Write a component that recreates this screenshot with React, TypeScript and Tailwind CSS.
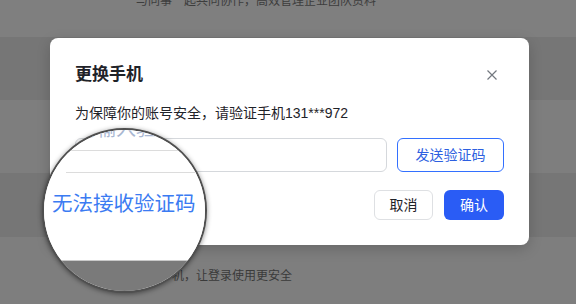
const font = 'font-["Liberation_Sans","Noto_Sans_CJK_SC",sans-serif]';

const Magnifier = () => (
  <div className="absolute left-[42px] top-[128px] flex h-[165px] w-[165px] flex-col overflow-hidden rounded-full border-2 border-[#4f4f4f] bg-white shadow-[0_1px_5px_rgba(0,0,0,0.45)]">
    <div className="flex h-[130px] shrink-0 flex-col bg-white">
      <div className="-mt-[11px] h-[32px] shrink-0 border-b border-[#dcdcdc] pl-[32px] text-[20px] leading-[20px] text-[#a9b7d2]">
        请输入验证码
      </div>
      <div className="ml-[22px] h-[22px] shrink-0 border-b border-[#dcdcdc]" />
      <div className="mt-[17px] pl-[8px] text-[20.5px] leading-[28px] whitespace-nowrap text-[#3b7bf2]">
        无法接收验证码
      </div>
    </div>
    <div className="flex-1 border-t border-[#c9c9c9] bg-[#7a7a7a]" />
  </div>
);

const Dialog = () => (
  <div className="absolute left-[50px] top-[38px] flex h-[207px] w-[479px] flex-col rounded-lg bg-white px-[25px] pt-[25px] pb-[25px] shadow-[0_4px_14px_rgba(0,0,0,0.18)]">
    <div className="flex h-6 items-center justify-between">
      <div className="text-[17px] font-semibold text-[#1f2329]">更换手机</div>
      <svg width="10" height="10" viewBox="0 0 10 10" className="mr-[7px]">
        <path d="M0.5 0.5 9.5 9.5M9.5 0.5 0.5 9.5" stroke="#73787f" strokeWidth="1.2" fill="none" />
      </svg>
    </div>
    <div className="mt-4 text-[14px] leading-5 text-[#1f2329]">
      为保障你的账号安全，请验证手机131***972
    </div>
    <div className="mt-[15px] flex h-[34px] gap-[10px]">
      <input
        className="h-full flex-1 rounded-md border border-[#d5d8dc] px-3 text-[14px] outline-none placeholder:text-[#8f959e]"
        placeholder="请输入验证码"
      />
      <button className="h-full w-[107px] rounded-md border border-[#3370ff] text-[14px] text-[#2d5fe0]">
        发送验证码
      </button>
    </div>
    <div className="mt-[18px] flex h-[30px] items-center justify-between">
      <span className="text-[14px] text-[#3370ff]">无法接收验证码</span>
      <div className="flex h-full gap-[11px]">
        <button className="h-full w-[59px] rounded-md border border-[#dee0e3] text-[14px] text-[#1f2329]">
          取消
        </button>
        <button className="h-full w-[60px] rounded-md bg-[#2a5cf5] text-[14px] text-white">
          确认
        </button>
      </div>
    </div>
  </div>
);

export default function App() {
  return (
    <div className={`relative h-[304px] w-[576px] overflow-hidden bg-[#7f7f7f] ${font}`}>
      <div className="flex h-full flex-col">
        <div className="h-[37px] shrink-0 bg-[#7f7f7f] pl-[136px]">
          <div className="-mt-[6px] text-[12px] leading-[14px] text-[#3d3d3d]">
            与同事一起共同协作，高效管理企业团队资料
          </div>
        </div>
        <div className="h-[63px] shrink-0 bg-[#767676]" />
        <div className="h-[73px] shrink-0 bg-[#7e7e7e]" />
        <div className="h-[64px] shrink-0 bg-[#767676]" />
        <div className="flex-1 bg-[#7e7e7e] pl-[136px] pt-[32px]">
          <div className="text-[12px] leading-[14px] text-[#3a3a3a]">绑定手机，让登录使用更安全</div>
        </div>
      </div>
      <Dialog />
      <Magnifier />
    </div>
  );
}
